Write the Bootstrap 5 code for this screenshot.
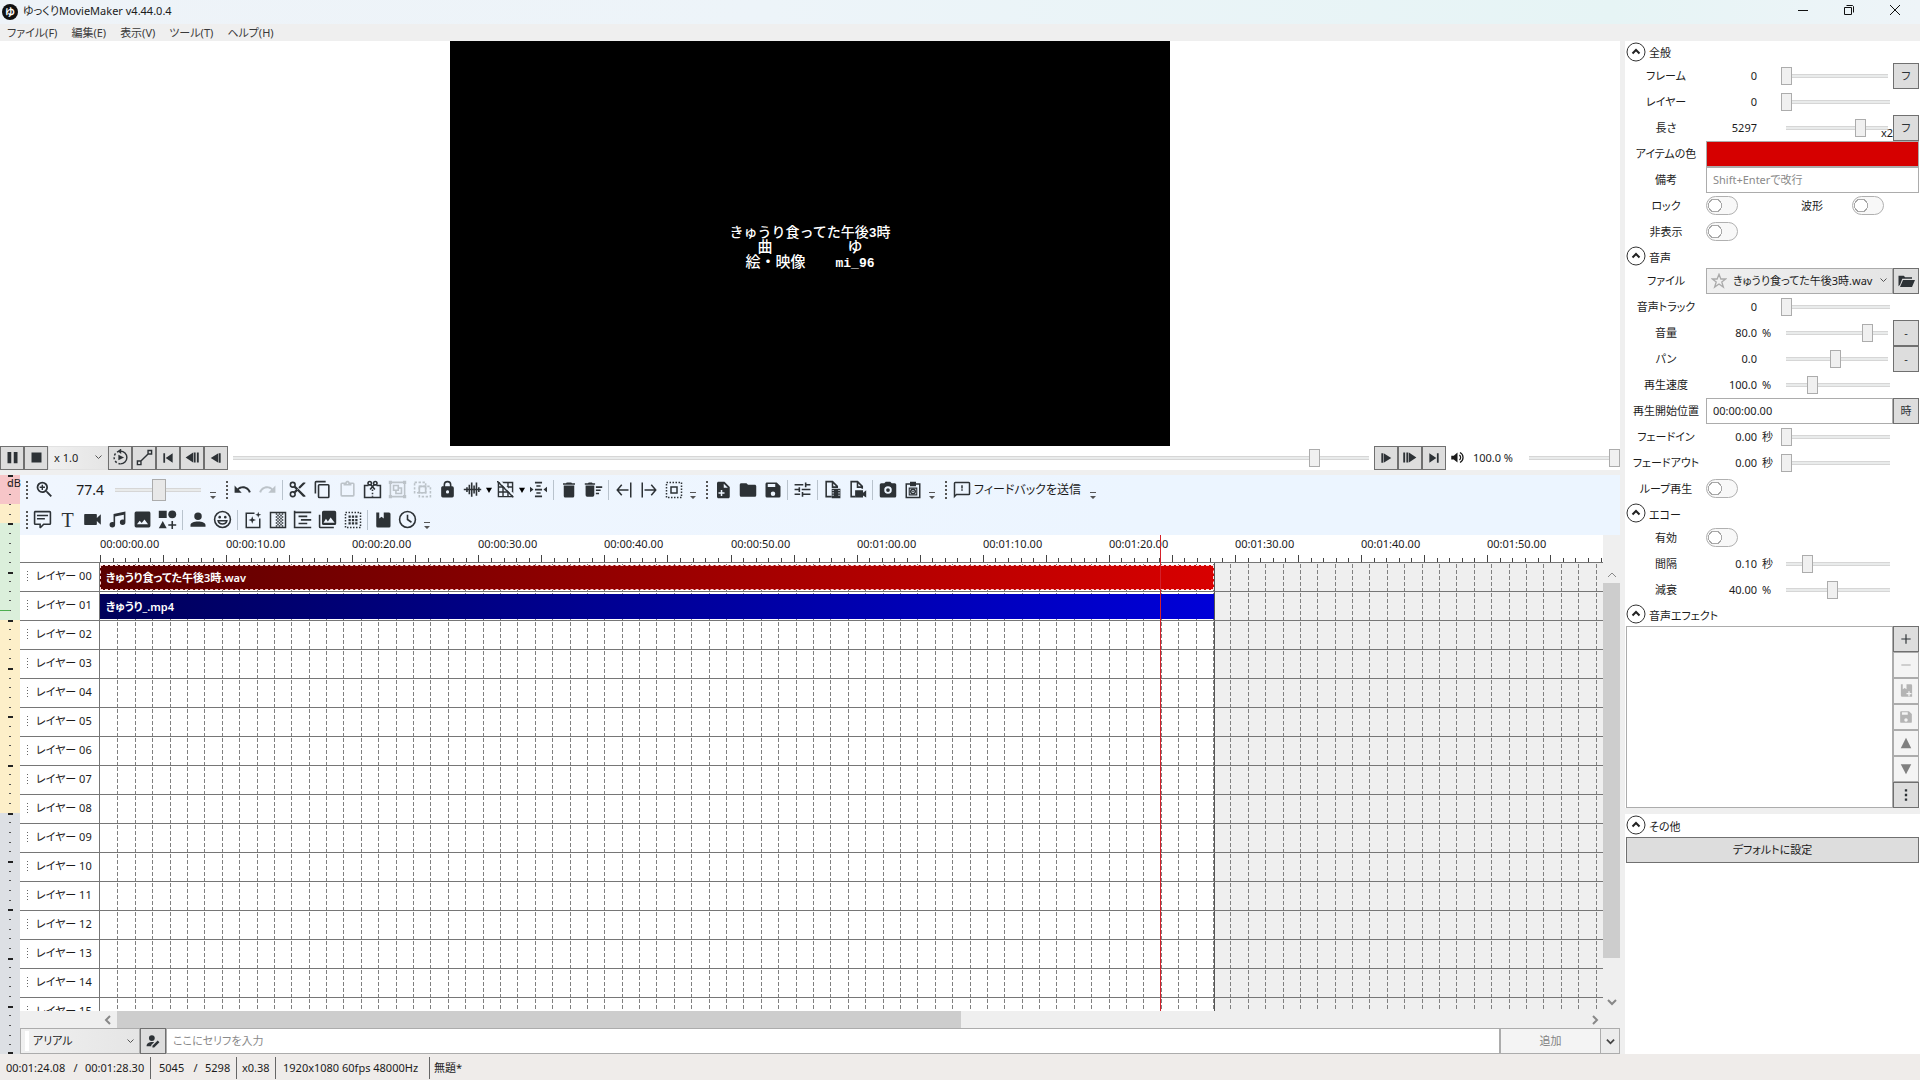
<!DOCTYPE html>
<html lang="ja">
<head>
<meta charset="utf-8">
<meta name="viewport" content="width=device-width, initial-scale=1">
<title>ゆっくりMovieMaker v4.44.0.4</title>
<link href="https://cdn.jsdelivr.net/npm/bootstrap@5.3.0/dist/css/bootstrap.min.css" rel="stylesheet">
<style>
:root{--ink:#2d3236;--line:#767676;--soft:#acacac;--chrome:#efefef;--face:#dddddd}
body{font:11px/16px "Noto Sans","Noto Sans CJK JP",sans-serif;font-feature-settings:"palt";color:#1b1b1b;background:var(--chrome);overflow:hidden}
button,input,select{font:inherit;font-feature-settings:inherit;color:inherit;border-radius:0;margin:0}
svg{display:block;flex:none}
.ico{width:19px;height:19px;fill:currentColor}
.ln{fill:none;stroke:currentColor;stroke-width:2}
main,.workrow,.timerow{min-height:0}
.shrinkable{min-width:0}
.titlebar{height:24px;padding-right:2px;background:linear-gradient(90deg,#eef3f8 0,#edf4f9 40%,#e6f4f5 84%,#eef4f8 100%)}
.titlebar .appname{padding:3px 0 0 3px}
.winbtn{width:46px;height:20px;border:0;background:none;display:flex;align-items:center;justify-content:center;padding:0}
.menubar{height:17px;padding:1px 0 0 7px;gap:14px}
.menubar a{color:#3a3a3a;text-decoration:none}
.stage{background:#fff}
.screen{width:720px;aspect-ratio:16/9;background:#000;color:#fff}
.caption-px{font:500 15px/15px "Liberation Mono","Noto Sans CJK JP",monospace;font-feature-settings:normal;padding-top:11px;white-space:pre}
.caption-px .song{font-size:14px}
.caption-px .half{font-size:13px;font-weight:700}
.playbar{height:24px;background:#fff}
.face{width:24px;height:24px;padding:0;border:1px solid #707070;background:var(--face);display:flex;align-items:center;justify-content:center;color:var(--ink);flex:none}
.face:disabled{border-color:var(--soft);background:#f4f4f4;color:#b4b4b4}
.combo{appearance:none;border:1px solid var(--soft);padding:0 16px 0 6px;background:url("data:image/svg+xml,%3Csvg xmlns='http://www.w3.org/2000/svg' width='7' height='5'%3E%3Cpath d='M.5.5l3 3 3-3' fill='none' stroke='%23555'/%3E%3C/svg%3E") right 5px center no-repeat,linear-gradient(90deg,#f0f0f0,#e5e5e5)}
.speed{width:60px;height:24px;border-color:#e2e2e2;padding-left:5px}
.volume{width:96px}
.volval{padding:0 11px 0 4px}
.track{appearance:none;background:none;height:18px;padding:0;min-width:0}
.track::-webkit-slider-runnable-track{height:18px;background:linear-gradient(#d6d6d6 0 1px,#e9ebeb 1px 3px,#d6d6d6 3px 4px) center/calc(100% - 10px) 4px no-repeat}
.track::-webkit-slider-thumb{appearance:none;width:11px;height:18px;border:1px solid var(--soft);border-radius:0;background:#f0f0f0}
.track.big,.track.big::-webkit-slider-runnable-track{height:22px}
.track.big::-webkit-slider-thumb{width:14px;height:22px;background:#e8e8e8}
.zoomer{width:96px;margin-left:6px}
.rail{height:5px;background:var(--chrome)}
.splitter{width:5px;background:var(--chrome)}
.meter{width:20px;position:relative}
.meter .dblabel{position:absolute;left:7px;top:0}
.tools{height:60px;background:linear-gradient(90deg,#f0f6fe,#ecf5ff 70%)}
.toolrow{height:30px}
.grip{width:10px;height:20px;background:radial-gradient(circle,#555 0 1px,transparent 1px) 5px 0/4px 4px repeat-y}
.tb{width:25px;height:24px;border:0;padding:0;background:none;display:flex;align-items:center;justify-content:center;color:var(--ink)}
.tb.wide{width:29px}
.tb:disabled{color:#bcc3c9}
.tb.serif{font:20px/22px "Liberation Serif",serif}
.dd{width:8px;height:24px;border:0;padding:0;background:none;display:flex;align-items:center;justify-content:center;color:#000}
.vsep{width:1px;height:20px;margin:0 2px;background:#b9c3cd}
.more{width:14px;height:24px;border:0;padding:12px 0 0 3px;background:none;color:#555}
.zoomval{width:45px;font-size:14px;text-align:right}
.feedback{width:112px;border:0;background:none;padding:0;text-align:left;font-size:12px}
.ruler{height:27px;background:#fff;position:relative;overflow:hidden}
.ruler .stamp{position:absolute;top:1px}
.tracks{overflow:hidden;position:relative;min-height:0;background:#fff}
.layer{height:29px;border-top:1px solid var(--line);flex:none;position:relative}
.layer::before{content:"";position:absolute;left:0;right:0;top:-1px;height:1px;background:var(--line);z-index:2}
.layerhead{width:80px;border-right:1px solid var(--line);background:#fff;padding:0 0 2px 5px;gap:6px}
.dots{width:5px;height:11px;background:radial-gradient(circle,#666 0 1px,transparent 1px) 0 0/5px 3px repeat-y}
.lane{padding-top:2px;min-width:0}
.clip{height:25px;position:relative;z-index:2;color:#fff;font-weight:600;padding:3px 5px;line-height:18px;border:1px solid transparent}
.clip.audio{background:linear-gradient(90deg,#5a0000,#d80000) border-box;border:1px dashed #ffd6d6}
.clip.movie{background:linear-gradient(90deg,#00005a,#0000d8) border-box}
.gridlay{position:absolute;left:80px;top:0;right:0;bottom:0;z-index:1;pointer-events:none}
.after{position:absolute;top:1px;right:0;bottom:0;background:#efefef;border-left:1px solid #555}
.playhead{position:absolute;top:0;bottom:0;width:1px;background:#d4202a;z-index:5}
.vscroll{width:17px;background:var(--chrome);color:#888}
.hscroll{height:17px;color:#888;padding:0 20px 0 83px}
.thumbbar{background:#cdcdcd}
.entry{height:26px}
.voice{width:120px;padding-left:12px;background-color:#e8e8e8;box-shadow:none}
.voicebox{position:relative}
.voicebox .chip{position:absolute;left:5px;top:3px;width:4px;height:20px;background:#fff}
.field{border:1px solid var(--soft);background:#fff;padding:0 6px;min-width:0;outline:0}
.field::placeholder{color:#8a8a8a;opacity:1}
.addbtn{width:101px;border:1px solid var(--soft);background:#f4f4f4;color:#838383}
.addmenu{width:19px;border:1px solid var(--soft);border-left:0;background:#ececec;color:#444;padding:0}
.status{height:26px;background:#efecea;padding:1px 0 0 6px}
.status .bar{width:1px;height:22px;background:#666}
.st1{width:60px}.st2{width:19px;text-align:center}.st3{width:65px}.st4{width:35px;padding-left:8px}.st5{width:31px}.st6{width:38px;padding-left:5px}.st7{width:153px;padding-left:7px}
.props{width:295px;background:#fff;padding:0 1px}
.exphead{height:23px;gap:3px;padding:0;border:0;background:none;width:100%;text-align:left}
.exphead:first-child{height:22px}
.exphead span{padding-top:3px}
.prop{height:26px}
.prop>label{width:80px;text-align:center;flex:none}
.prop>label.second{width:114px;padding-left:34px}
.num{width:51px;text-align:right;flex:none}
.unit{width:24px;padding-left:5px;flex:none}
.sq{width:26px;height:26px}
.noend{margin-right:24px}
.tog{appearance:none;width:32px;height:19px;border:1px solid #b0b0b0;border-radius:10px;background:radial-gradient(circle at 8px 50%,#fff 0 6px,#a8a8a8 6px 7px,transparent 7px) #f8f8f8;flex:none}
.swatch{appearance:none;border:1px solid var(--soft);padding:0;height:26px;background:none}
.swatch::-webkit-color-swatch-wrapper{padding:0}
.swatch::-webkit-color-swatch{border:0;border-radius:0}
.times{position:absolute;right:0;bottom:-2px;line-height:12px}
.starred{position:relative}
.starred svg{position:absolute;left:5px;top:5px;color:#aaa}
.starred select{padding-left:26px;height:26px}
.fxlist{border:1px solid var(--soft);background:#fff}
.gap6{height:6px;margin:0 -1px;background:var(--chrome)}
.defaults{height:26px;border:1px solid #707070;background:var(--face)}
</style>
<script src="https://cdn.jsdelivr.net/npm/bootstrap@5.3.0/dist/js/bootstrap.bundle.min.js"></script>
</head>
<body class="vh-100 d-flex flex-column">

<svg width="0" height="0" class="position-absolute" aria-hidden="true">
<symbol id="zoomin" viewBox="0 0 24 24"><path d="M15.5,14L20.5,19L19,20.5L14,15.5V14.71L13.73,14.43C12.59,15.41 11.11,16 9.5,16A6.5,6.5 0 0,1 3,9.5A6.5,6.5 0 0,1 9.5,3A6.5,6.5 0 0,1 16,9.5C16,11.11 15.41,12.59 14.43,13.73L14.71,14H15.5M9.5,14C12,14 14,12 14,9.5C14,7 12,5 9.5,5C7,5 5,7 5,9.5C5,12 7,14 9.5,14M12.5,10.3H10.3V12.5H8.7V10.3H6.5V8.7H8.7V6.5H10.3V8.7H12.5Z"/></symbol>
<symbol id="undo" viewBox="0 0 24 24"><path d="M12.5,8C9.85,8 7.45,9 5.6,10.6L2,7V16H11L7.38,12.38C8.77,11.22 10.54,10.5 12.5,10.5C16.04,10.5 19.05,12.81 20.1,16L22.47,15.22C21.08,11.03 17.15,8 12.5,8Z"/></symbol>
<symbol id="redo" viewBox="0 0 24 24"><path d="M18.4,10.6C16.55,9 14.15,8 11.5,8C6.85,8 2.92,11.03 1.54,15.22L3.9,16C4.95,12.81 7.95,10.5 11.5,10.5C13.45,10.5 15.23,11.22 16.62,12.38L13,16H22V7L18.4,10.6Z"/></symbol>
<symbol id="cut" viewBox="0 0 24 24"><path d="M19,3L13,9L15,11L22,4V3M12,12.5A0.5,0.5 0 0,1 11.5,12A0.5,0.5 0 0,1 12,11.5A0.5,0.5 0 0,1 12.5,12A0.5,0.5 0 0,1 12,12.5M6,20A2,2 0 0,1 4,18C4,16.89 4.9,16 6,16A2,2 0 0,1 8,18C8,19.11 7.1,20 6,20M6,8A2,2 0 0,1 4,6C4,4.89 4.9,4 6,4A2,2 0 0,1 8,6C8,7.11 7.1,8 6,8M9.64,7.64C9.87,7.14 10,6.59 10,6A4,4 0 0,0 6,2A4,4 0 0,0 2,6A4,4 0 0,0 6,10C6.59,10 7.14,9.87 7.64,9.64L10,12L7.64,14.36C7.14,14.13 6.59,14 6,14A4,4 0 0,0 2,18A4,4 0 0,0 6,22A4,4 0 0,0 10,18C10,17.41 9.87,16.86 9.64,16.36L12,14L19,21H22V20L9.64,7.64Z"/></symbol>
<symbol id="copy" viewBox="0 0 24 24"><path d="M19,21H8V7H19M19,5H8A2,2 0 0,0 6,7V21A2,2 0 0,0 8,23H19A2,2 0 0,0 21,21V7A2,2 0 0,0 19,5M16,1H4A2,2 0 0,0 2,3V17H4V3H16V1Z"/></symbol>
<symbol id="paste" viewBox="0 0 24 24"><path d="M19,3H14.82C14.4,1.84 13.3,1 12,1C10.7,1 9.6,1.84 9.18,3H5A2,2 0 0,0 3,5V19A2,2 0 0,0 5,21H19A2,2 0 0,0 21,19V5A2,2 0 0,0 19,3M12,3A1,1 0 0,1 13,4A1,1 0 0,1 12,5A1,1 0 0,1 11,4A1,1 0 0,1 12,3M7,7H17V5H19V19H5V5H7V7Z"/></symbol>
<symbol id="split" viewBox="0 0 24 24"><g class="ln"><path d="M7,7H2V22H22V7H17"/><circle cx="8.500" cy="4" r="2.200"/><circle cx="15.500" cy="4" r="2.200"/><path d="M10,6L15,12M14,6L9,12"/><path d="M12,12V21" stroke-dasharray="2 2"/></g></symbol>
<symbol id="group" viewBox="0 0 24 24"><path d="M1,1V5H2V19H1V23H5V22H19V23H23V19H22V5H23V1H19V2H5V1M5,4H19V5H20V19H19V20H5V19H4V5H5M6,6V14H9V18H18V9H14V6M8,8H12V12H8M14,11H16V16H11V14H14"/></symbol>
<symbol id="ungroup" viewBox="0 0 24 24"><g class="ln"><path d="M2,3H16V16H2Z" stroke-dasharray="3 2"/><path d="M8,8H22V21H8Z" stroke-dasharray="3 2"/><path d="M8,16V8H16V16Z"/></g></symbol>
<symbol id="lock" viewBox="0 0 24 24"><path d="M12,17A2,2 0 0,0 14,15C14,13.89 13.1,13 12,13A2,2 0 0,0 10,15A2,2 0 0,0 12,17M18,8A2,2 0 0,1 20,10V20A2,2 0 0,1 18,22H6A2,2 0 0,1 4,20V10C4,8.89 4.9,8 6,8H7V6A5,5 0 0,1 12,1A5,5 0 0,1 17,6V8H18M12,3A3,3 0 0,0 9,6V8H15V6A3,3 0 0,0 12,3Z"/></symbol>
<symbol id="wave" viewBox="0 0 24 24"><path class="ln" d="M1,12H23M5,9V15M8,6V18M11,3V21M14,7V17M17,3V20M20,9V15"/></symbol>
<symbol id="gridoff" viewBox="0 0 24 24"><g class="ln"><path d="M2,2H22V22H2ZM8.500,2V22M15.500,2V22M2,8.500H22M2,15.500H22"/><path d="M3,-1L25,21" stroke="#eff6fe" stroke-width="3"/><path d="M0,0L23,23"/></g></symbol>
<symbol id="between" viewBox="0 0 24 24"><path d="M7,1H17V3.500H7ZM9,6H15V8H9ZM7,11H17V13.500H7ZM9,16H15V18H9ZM7,20.500H17V23H7ZM0,8L5,12L0,16ZM24,8L19,12L24,16Z"/></symbol>
<symbol id="trash" viewBox="0 0 24 24"><path d="M20,3H16L15,2H9L8,3H4V5H20M5,20A2,2 0 0,0 7,22H17A2,2 0 0,0 19,20V6H5Z"/></symbol>
<symbol id="sweep" viewBox="0 0 24 24"><path d="M15,16H19V18H15V16M15,8H23V10H15V8M15,12H21V14H15V12M2,19A2,2 0 0,0 4,21H11A2,2 0 0,0 13,19V7H2V19M14,4H11L10,3H6L5,4H1V6H14V4Z"/></symbol>
<symbol id="toleft" viewBox="0 0 24 24"><path class="ln" d="M21,2V22M18,12H3M9,5L3,12L9,19"/></symbol>
<symbol id="toright" viewBox="0 0 24 24"><path class="ln" d="M3,2V22M6,12H21M15,5L21,12L15,19"/></symbol>
<symbol id="selall" viewBox="0 0 24 24"><g class="ln"><path d="M2,2H22V22H2Z" stroke-dasharray="2 2"/><path d="M8,8H16V16H8Z"/></g></symbol>
<symbol id="newfile" viewBox="0 0 24 24"><path fill-rule="evenodd" d="M14 1H6C4.890 1 4 1.890 4 3V21C4 22.110 4.890 23 6 23H19C20.110 23 21 22.110 21 21V8L14 1M13 9V3.500L18.500 9H13M11,12V15H14V17H11V20H9V17H6V15H9V12Z"/></symbol>
<symbol id="folder" viewBox="0 0 24 24"><path d="M10,3H3C1.890,3 1,3.890 1,5V19A2,2 0 0,0 3,21H21A2,2 0 0,0 23,19V7C23,5.890 22.100,5 21,5H12L10,3Z"/></symbol>
<symbol id="save" viewBox="0 0 24 24"><path d="M15,8H5V4H15M12,20A3,3 0 0,1 9,17A3,3 0 0,1 12,14A3,3 0 0,1 15,17A3,3 0 0,1 12,20M17,2H4C2.890,2 2,2.900 2,4V20A2,2 0 0,0 4,22H20A2,2 0 0,0 22,20V7L17,2Z"/></symbol>
<symbol id="tune" viewBox="0 0 24 24"><path d="M2,17V19H9V17H2M2,5V7H13V5H2M13,21V19H22V17H13V15H11V21H13M7,9V11H2V13H7V15H9V9H7M22,13V11H11V13H22M15,9H17V7H22V5H17V3H15V9Z"/></symbol>
<symbol id="filevid" viewBox="0 0 24 24"><path class="ln" d="M11,21H4V2H12L18,8V10M12,2V9H18"/><path fill-rule="evenodd" d="M11,11H22V23H11ZM12,12.500V14H13.500V12.500ZM12,15.500V17H13.500V15.500ZM12,18.500V20H13.500V18.500ZM19.500,12.500V14H21V12.500ZM19.500,15.500V17H21V15.500ZM19.500,18.500V20H21V18.500Z"/></symbol>
<symbol id="filecam" viewBox="0 0 24 24"><path class="ln" d="M9,21H4V2H12L18,8V11M12,2V9H18"/><path d="M9,13H19V16L23,13V22L19,19.500V22H9Z"/></symbol>
<symbol id="camera" viewBox="0 0 24 24"><path d="M3,3H7L9,1H15L17,3H21A2,2 0 0,1 23,5V20A2,2 0 0,1 21,22H3A2,2 0 0,1 1,20V5A2,2 0 0,1 3,3M12,7A5,5 0 0,0 7,12A5,5 0 0,0 12,17A5,5 0 0,0 17,12A5,5 0 0,0 12,7M12,9.500A2.500,2.500 0 0,1 14.500,12A2.500,2.500 0 0,1 12,14.500A2.500,2.500 0 0,1 9.500,12A2.500,2.500 0 0,1 12,9.500Z"/></symbol>
<symbol id="clipcam" viewBox="0 0 24 24"><g class="ln"><path d="M3,4H21V22H3Z"/><circle cx="12" cy="14" r="3"/><path d="M7,9.500H17V18.500H7Z" stroke-width="1.500"/></g><path d="M8,1H16V7H8Z"/><path d="M11,13H13V15H11Z"/></symbol>
<symbol id="feed" viewBox="0 0 24 24"><path d="M13,10H11V5.500H13V10M13,13H11V11H13V13M23,3V17A2,2 0 0,1 21,19H5L1,23V3A2,2 0 0,1 3,1H21A2,2 0 0,1 23,3M21,3H3V18.200L4.200,17H21V3Z"/></symbol>
<symbol id="speech" viewBox="0 0 24 24"><path d="M9,23A1,1 0 0,1 8,22V19H3A2,2 0 0,1 1,17V3C1,1.890 1.900,1 3,1H21A2,2 0 0,1 23,3V17A2,2 0 0,1 21,19H13.900L10.200,22.710C10,22.900 9.750,23 9.500,23H9M10,17V20.080L13.080,17H21V3H3V17H10M5,6H19V8H5V6M5,10H15V12H5V10Z"/></symbol>
<symbol id="video" viewBox="0 0 24 24"><path d="M17.500,10V6A1,1 0 0,0 16.500,5H2.500A1,1 0 0,0 1.500,6V18A1,1 0 0,0 2.500,19H16.500A1,1 0 0,0 17.500,18V14L22.500,18.500V5.500Z"/></symbol>
<symbol id="music" viewBox="0 0 24 24"><path d="M22,2V15.500A3.500,3.500 0 0,1 18.500,19A3.500,3.500 0 0,1 15,15.500A3.500,3.500 0 0,1 18.500,12C19.040,12 19.550,12.120 20,12.340V6L9,8.300V18.500A3.500,3.500 0 0,1 5.500,22A3.500,3.500 0 0,1 2,18.500A3.500,3.500 0 0,1 5.500,15C6.040,15 6.550,15.120 7,15.340V5L22,2Z"/></symbol>
<symbol id="image" viewBox="0 0 24 24"><path d="M8.500,13.500L11,16.500L14.500,12L19,18H5M22,20V4C22,2.890 21.100,2 20,2H4A2,2 0 0,0 2,4V20A2,2 0 0,0 4,22H20A2,2 0 0,0 22,20Z"/></symbol>
<symbol id="shapes" viewBox="0 0 24 24"><path d="M1,1H11V10H1ZM6,14L11,23H1ZM17,14H19V18H23V20H19V24H17V20H13V18H17Z"/><circle cx="18" cy="5.500" r="5"/></symbol>
<symbol id="person" viewBox="0 0 24 24"><path d="M12,2A5,5 0 0,1 17,7A5,5 0 0,1 12,12A5,5 0 0,1 7,7A5,5 0 0,1 12,2M12,14C17.500,14 22,16 22,18.500V21H2V18.500C2,16 6.500,14 12,14Z"/></symbol>
<symbol id="smile" viewBox="0 0 24 24"><circle class="ln" cx="12" cy="12" r="10"/><circle cx="8.500" cy="9" r="1.600"/><circle cx="15.500" cy="9" r="1.600"/><path class="ln" d="M6.500,13.500H17.500C16.500,19 7.500,19 6.500,13.500Z" stroke-width="1.600"/></symbol>
<symbol id="effect" viewBox="0 0 24 24"><path class="ln" d="M14,3H3V22H21V10"/><path d="M11,7L12.300,10.700L16,12L12.300,13.300L11,17L9.700,13.300L6,12L9.700,10.700ZM19,1L20,4L23,5L20,6L19,9L18,6L15,5L18,4Z"/></symbol>
<symbol id="trans" viewBox="0 0 24 24"><path class="ln" d="M2,2H22V22H2Z"/><path d="M9,3H11V5H9ZM9,7H11V9H9ZM9,11H11V13H9ZM9,15H11V17H9ZM9,19H11V21H9ZM11,5H13V7H11ZM11,9H13V11H11ZM11,13H13V15H11ZM11,17H13V19H11ZM13,3H15V5H13ZM13,7H15V9H13ZM13,11H15V13H13ZM13,15H15V17H13ZM13,19H15V21H13ZM15,5H17V7H15ZM15,9H17V11H15ZM15,13H17V15H15ZM15,17H17V19H15ZM17,3H19V5H17ZM17,7H19V9H17ZM17,11H19V13H17ZM17,15H19V17H17ZM17,19H19V21H17Z"/></symbol>
<symbol id="align" viewBox="0 0 24 24"><path class="ln" d="M2,1V23M2,3H23M7,8H18M10,12.500H23M7,17H18M2,22H23"/></symbol>
<symbol id="images" viewBox="0 0 24 24"><path d="M23,17V3A2,2 0 0,0 21,1H7A2,2 0 0,0 5,3V17A2,2 0 0,0 7,19H21A2,2 0 0,0 23,17M10,11L12.500,14.500L16,9.500L21,16H7M1,6V21A2,2 0 0,0 3,23H20V21H3V6Z"/></symbol>
<symbol id="scene" viewBox="0 0 24 24"><path class="ln" d="M2,2H22V22H2Z" stroke-dasharray="2 2"/><path d="M6,6H9V9H6ZM10.500,6H13.500V9H10.500ZM15,6H18V9H15ZM6,10.500H9V13.500H6ZM10.500,10.500H13.500V13.500H10.500ZM15,10.500H18V13.500H15ZM6,15H9V18H6ZM10.500,15H13.500V18H10.500ZM15,15H18V18H15Z"/></symbol>
<symbol id="book" viewBox="0 0 24 24"><path d="M3,2H7V10L10,7.500L13,10V2H20A2,2 0 0,1 22,4V20A2,2 0 0,1 20,22H5A2,2 0 0,1 3,20Z"/></symbol>
<symbol id="clock" viewBox="0 0 24 24"><g class="ln"><circle cx="12" cy="12" r="10"/><path d="M12,6V12L17,15.500"/></g></symbol>
<symbol id="pause" viewBox="0 0 24 24"><path d="M4,3H10V21H4ZM14,3H20V21H14Z"/></symbol>
<symbol id="stop" viewBox="0 0 24 24"><path d="M4,4H20V20H4Z"/></symbol>
<symbol id="loop" viewBox="0 0 24 24"><path class="ln" d="M12,3A9,9 0 0,1 12,21"/><path class="ln" d="M12,21A9,9 0 0,1 12,3" stroke-dasharray="3 2.600"/><path d="M13,-1V7L8,3ZM9,8L17,12L9,16Z"/></symbol>
<symbol id="range" viewBox="0 0 24 24"><path class="ln" d="M2,17H7V22H2ZM17,2H22V7H17ZM7,17L17,7"/></symbol>
<symbol id="first" viewBox="0 0 24 24"><path d="M4,4H7V20H4ZM20,4V20L8,12Z"/></symbol>
<symbol id="back2" viewBox="0 0 24 24"><path d="M13,4V20L1,12ZM14,4H17V20H14ZM19,4H22V20H19Z"/></symbol>
<symbol id="back1" viewBox="0 0 24 24"><path d="M16,4V20L3,12ZM17,4H20V20H17Z"/></symbol>
<symbol id="fwd1" viewBox="0 0 24 24"><path d="M4,4H7V20H4ZM8,4L21,12L8,20Z"/></symbol>
<symbol id="fwd2" viewBox="0 0 24 24"><path d="M2,4H5V20H2ZM7,4H10V20H7ZM11,4L23,12L11,20Z"/></symbol>
<symbol id="last" viewBox="0 0 24 24"><path d="M4,4L16,12L4,20ZM17,4H20V20H17Z"/></symbol>
<symbol id="speaker" viewBox="0 0 24 24"><path d="M2,9V15H6L12,20V4L6,9Z"/><path class="ln" d="M15,8A5,5 0 0,1 15,16M16,4A9,9 0 0,1 16,20"/></symbol>
<symbol id="openfolder" viewBox="0 0 24 24"><path d="M2,19V5H9L11,7H20V9H7L4,17ZM8,10.500H24L20,20H4Z"/></symbol>
<symbol id="star" viewBox="0 0 24 24"><path class="ln" stroke-width="1.500" d="M12,2L14.800,9H22L16.200,13.500L18.500,21L12,16.500L5.500,21L7.800,13.500L2,9H9.200Z"/></symbol>
<symbol id="plus" viewBox="0 0 24 24"><path class="ln" stroke-width="2.500" d="M12,4V20M4,12H20"/></symbol>
<symbol id="minus" viewBox="0 0 24 24"><path class="ln" d="M4,12H20"/></symbol>
<symbol id="booksave" viewBox="0 0 24 24"><path fill-rule="evenodd" d="M3,2H6V10L9,8L12,10V2H19A2,2 0 0,1 21,4V22H5A2,2 0 0,1 3,20ZM15,13V16H12V18H15V21H17V18H20V16H17V13Z"/></symbol>
<symbol id="up" viewBox="0 0 24 24"><path fill="#808080" d="M12,3L21,21H3Z"/></symbol>
<symbol id="down" viewBox="0 0 24 24"><path fill="#808080" d="M12,21L21,4H3Z"/></symbol>
<symbol id="kebab" viewBox="0 0 24 24"><path d="M10,2H14V6H10ZM10,10H14V14H10ZM10,18H14V22H10Z"/></symbol>
<symbol id="voice" viewBox="0 0 24 24"><circle cx="10" cy="7" r="5"/><path d="M1,20C1,15 8,12.500 14,14L9,19V21H1ZM11,20L20,11L23,14L14,23H11Z"/></symbol>
<symbol id="exp" viewBox="0 0 20 20"><circle cx="10" cy="10" r="9" fill="none" stroke="#333"/><path d="M6.500,11.500L10,8L13.500,11.500" fill="none" stroke="#222" stroke-width="2"/></symbol>
<symbol id="ddt" viewBox="0 0 8 8"><path d="M0,1H8L4,8Z"/></symbol>
<symbol id="ovf" viewBox="0 0 8 8"><path d="M1,0H7V1H1ZM1,4H7L4,7Z"/></symbol>
<symbol id="cl" viewBox="0 0 10 10"><path class="ln" stroke-width="1" d="M7,1L3,5L7,9"/></symbol>
<symbol id="cr" viewBox="0 0 10 10"><path class="ln" stroke-width="1" d="M3,1L7,5L3,9"/></symbol>
<symbol id="cu" viewBox="0 0 10 10"><path class="ln" stroke-width="1" d="M1,7L5,3L9,7"/></symbol>
<symbol id="cd" viewBox="0 0 10 10"><path class="ln" stroke-width="1" d="M1,3L5,7L9,3"/></symbol>
</svg>

<header class="titlebar d-flex align-items-start">
  <svg class="mt-1" width="20" height="16" viewBox="0 0 20 16"><circle cx="10" cy="8" r="8" fill="#111"/><text x="10" y="12" font-size="10" font-weight="700" text-anchor="middle" fill="#fff">ゆ</text></svg>
  <span class="appname">ゆっくりMovieMaker v4.44.0.4</span>
  <div class="ms-auto d-flex">
    <button class="winbtn" aria-label="最小化"><svg width="10" height="10"><path d="M0,5.500H10" stroke="#111"/></svg></button>
    <button class="winbtn" aria-label="元に戻す"><svg width="10" height="10"><path d="M.5,2.500H7.500V9.500H.5ZM2.500,.5H8.500L9.500,1.500V7.500" fill="none" stroke="#111"/></svg></button>
    <button class="winbtn" aria-label="閉じる"><svg width="10" height="10"><path d="M0,0L10,10M10,0L0,10" stroke="#111"/></svg></button>
  </div>
</header>
<nav class="menubar d-flex align-items-center">
  <a href="#">ファイル(F)</a><a href="#">編集(E)</a><a href="#">表示(V)</a><a href="#">ツール(T)</a><a href="#">ヘルプ(H)</a>
</nav>

<main class="d-flex flex-grow-1">
  <div class="d-flex flex-column flex-grow-1 shrinkable">
    <section class="stage d-flex justify-content-center">
      <div class="screen d-flex flex-column align-items-center justify-content-center caption-px"><span class="song">きゅうり食ってた午後<span class="half">3</span>時</span><span>曲　　　　　ゆ</span><span>絵・映像　　<span class="half">mi_96</span></span></div>
    </section>
    <section class="playbar d-flex align-items-center">
      <button class="face" aria-label="一時停止" data-i="pause" data-s="15"></button>
      <button class="face" aria-label="停止" data-i="stop" data-s="15"></button>
      <select class="combo speed" aria-label="再生速度"><option>x 1.0</option></select>
      <button class="face" aria-label="ループ" data-i="loop" data-s="17"></button>
      <button class="face" aria-label="範囲" data-i="range" data-s="17"></button>
      <button class="face" aria-label="先頭へ" data-i="first" data-s="14"></button>
      <button class="face" aria-label="戻る" data-i="back2" data-s="15"></button>
      <button class="face" aria-label="1フレーム戻る" data-i="back1" data-s="14"></button>
      <input type="range" class="track flex-grow-1" aria-label="再生位置" min="0" max="5298" value="5045">
      <button class="face" aria-label="1フレーム進む" data-i="fwd1" data-s="14"></button>
      <button class="face" aria-label="進む" data-i="fwd2" data-s="15"></button>
      <button class="face" aria-label="末尾へ" data-i="last" data-s="14"></button>
      <span class="px-1" data-i="speaker" data-s="15"></span>
      <span class="volval">100.0 %</span>
      <input type="range" class="track volume" aria-label="音量" value="100">
    </section>
    <div class="rail"></div>
    <div class="workrow d-flex flex-grow-1">
      <div class="meter"><svg id="meter" width="20" height="100%"></svg><span class="dblabel">dB</span></div>
      <div class="d-flex flex-column flex-grow-1 shrinkable">
        <div class="tools">
          <div class="toolrow d-flex align-items-center">
            <span class="grip"></span>
            <button class="tb wide" aria-label="拡大" data-i="zoomin" data-s="21"></button>
            <span class="zoomval">77.4</span>
            <input type="range" class="track big zoomer" aria-label="ズーム" value="51">
            <button class="more" aria-label="その他"></button>
            <span class="grip"></span>
            <button class="tb" aria-label="元に戻す" data-i="undo"></button><button class="tb" aria-label="やり直す" data-i="redo" disabled></button><span class="vsep"></span>
            <button class="tb" aria-label="切り取り" data-i="cut"></button><button class="tb" aria-label="コピー" data-i="copy"></button><button class="tb" aria-label="貼り付け" data-i="paste" disabled></button><button class="tb" aria-label="分割" data-i="split"></button><button class="tb" aria-label="グループ化" data-i="group" disabled></button><button class="tb" aria-label="グループ解除" data-i="ungroup" disabled></button><button class="tb" aria-label="ロック" data-i="lock"></button><button class="tb" aria-label="波形" data-i="wave"></button><button class="dd" aria-label="波形の種類" data-i="ddt" data-s="6"></button><button class="tb" aria-label="グリッド" data-i="gridoff" data-s="17"></button><button class="dd" aria-label="グリッドの種類" data-i="ddt" data-s="6"></button><button class="tb" aria-label="間隔" data-i="between" data-s="17"></button><span class="vsep"></span>
            <button class="tb" aria-label="削除" data-i="trash" data-s="18"></button><button class="tb" aria-label="詰めて削除" data-i="sweep"></button><span class="vsep"></span>
            <button class="tb" aria-label="左へ" data-i="toleft" data-s="18"></button><button class="tb" aria-label="右へ" data-i="toright" data-s="18"></button><button class="tb" aria-label="全選択" data-i="selall" data-s="18"></button><button class="more" aria-label="その他"></button>
            <span class="grip"></span>
            <button class="tb" aria-label="新規" data-i="newfile" data-s="18"></button><button class="tb" aria-label="開く" data-i="folder" data-s="18"></button><button class="tb" aria-label="保存" data-i="save" data-s="18"></button><span class="vsep"></span>
            <button class="tb" aria-label="設定" data-i="tune"></button><span class="vsep"></span>
            <button class="tb" aria-label="動画出力" data-i="filevid"></button><button class="tb" aria-label="出力" data-i="filecam"></button><span class="vsep"></span>
            <button class="tb" aria-label="画像保存" data-i="camera" data-s="18"></button><button class="tb" aria-label="画像コピー" data-i="clipcam" data-s="18"></button><button class="more" aria-label="その他"></button>
            <span class="grip"></span>
            <button class="tb" aria-label="フィードバック" data-i="feed" data-s="18"></button><button class="feedback">フィードバックを送信</button><button class="more" aria-label="その他"></button>
          </div>
          <div class="toolrow d-flex align-items-center">
            <span class="grip"></span>
            <button class="tb" aria-label="ボイス" data-i="speech"></button><button class="tb serif" aria-label="テキスト">T</button><button class="tb" aria-label="動画" data-i="video"></button><button class="tb" aria-label="音声" data-i="music"></button><button class="tb" aria-label="画像" data-i="image"></button><button class="tb" aria-label="図形" data-i="shapes"></button><span class="vsep"></span>
            <button class="tb" aria-label="立ち絵" data-i="person" data-s="18"></button><button class="tb" aria-label="表情" data-i="smile"></button><span class="vsep"></span>
            <button class="tb" aria-label="エフェクト" data-i="effect" data-s="18"></button><button class="tb" aria-label="場面切り替え" data-i="trans" data-s="18"></button><button class="tb" aria-label="整列" data-i="align"></button><button class="tb" aria-label="画面の複製" data-i="images"></button><button class="tb" aria-label="グループ制御" data-i="scene" data-s="18"></button><span class="vsep"></span>
            <button class="tb" aria-label="テンプレート" data-i="book" data-s="18"></button><button class="tb" aria-label="履歴" data-i="clock"></button><button class="more" aria-label="その他"></button>
          </div>
        </div>
        <div class="timerow d-flex flex-grow-1">
          <div class="d-flex flex-column flex-grow-1 position-relative shrinkable">
            <div class="ruler flex-shrink-0" id="ruler"><svg id="ticks" width="100%" height="27" shape-rendering="crispEdges"></svg></div>
            <div class="tracks flex-grow-1" id="tracks">
              <div class="gridlay"><div class="after" id="after"></div><svg id="dashes" class="position-absolute" width="100%" height="100%" shape-rendering="crispEdges"></svg></div>
            </div>
            <div class="playhead" id="playhead"></div>
          </div>
          <div class="vscroll d-flex flex-column align-items-center">
            <svg class="mt-4" width="10" height="24" viewBox="0 -14 10 24"><path d="M1,4L5,0L9,4" fill="none" stroke="#888"/></svg>
            <div class="thumbbar w-100" style="flex:375"></div>
            <div style="flex:39"></div>
            <svg class="mb-1" width="10" height="10"><use href="#cd"/></svg>
          </div>
        </div>
        <div class="hscroll d-flex align-items-center">
          <svg class="me-1" width="10" height="10"><use href="#cl"/></svg>
          <div class="thumbbar h-100" style="flex:845"></div>
          <div style="flex:630"></div>
          <svg width="10" height="10"><use href="#cr"/></svg>
        </div>
        <div class="entry d-flex">
          <div class="voicebox d-flex"><select class="combo voice" aria-label="キャラクター"><option>アリアル</option></select><span class="chip"></span></div>
          <button class="face sq" aria-label="ボイス編集" data-i="voice" data-s="14"></button>
          <input class="field flex-grow-1" type="text" aria-label="セリフ" placeholder="ここにセリフを入力">
          <button class="addbtn" disabled>追加</button>
          <button class="addmenu d-flex align-items-center justify-content-center" aria-label="追加メニュー" data-i="cd" data-s="9"></button>
        </div>
      </div>
    </div>
  </div>
  <div class="splitter flex-shrink-0"></div>
  <aside class="props flex-shrink-0" id="props"></aside>
</main>
<footer class="status d-flex align-items-center flex-shrink-0">
  <span class="st1">00:01:24.08</span><span class="st2">/</span><span class="st3">00:01:28.30</span><span class="bar"></span>
  <span class="st4">5045</span><span class="st2">/</span><span class="st5">5298</span><span class="bar"></span>
  <span class="st6">x0.38</span><span class="bar"></span><span class="st7">1920x1080 60fps 48000Hz</span><span class="bar"></span><span class="ps-1">無題*</span>
</footer>

<script>
const icon = (id, s = 19) => `<svg class="ico" style="width:${s}px;height:${s}px"><use href="#${id}"/></svg>`;
const props = document.getElementById('props');
let n = 0;

// Property panel rows
const head = t => `<button class="exphead d-flex align-items-center">${icon('exp', 20)}<span>${t}</span></button>`;
const slider = (label, num, unit, val, btn, extra = '') => {
  const id = 'p' + (++n);
  return `<div class="prop d-flex align-items-center"><label for="${id}">${label}</label><span class="num">${num}</span><span class="unit">${unit}</span>
  <div class="flex-grow-1 d-flex position-relative ${btn ? '' : 'noend'}"><input type="range" class="track w-100" id="${id}" value="${val}">${extra}</div>${btn ? `<button class="face sq">${btn}</button>` : ''}</div>`;
};
const toggle = (label, more = '') => {
  const id = 'p' + (++n);
  return `<div class="prop d-flex align-items-center"><label for="${id}">${label}</label><input type="checkbox" class="tog" id="${id}">${more}</div>`;
};
props.innerHTML =
  head('全般') + slider('フレーム', '0', '', 0, 'フ') + slider('レイヤー', '0', '', 0) +
  slider('長さ', '5297', '', 73, 'フ', '<span class="times">x2</span>') +
  `<div class="prop d-flex align-items-center"><label for="col">アイテムの色</label><input type="color" class="swatch flex-grow-1" id="col" value="#d60000"></div>
   <div class="prop d-flex align-items-center"><label for="memo">備考</label><input type="text" class="field flex-grow-1 h-100" id="memo" placeholder="Shift+Enterで改行"></div>` +
  toggle('ロック', '<label class="second" for="wv">波形</label><input type="checkbox" class="tog" id="wv">') + toggle('非表示') +
  head('音声') +
  `<div class="prop d-flex align-items-center"><label for="file">ファイル</label><div class="starred flex-grow-1">${icon('star', 16)}<select class="combo w-100" id="file"><option>きゅうり食ってた午後3時.wav</option></select></div><button class="face sq" aria-label="開く">${icon('openfolder', 18)}</button></div>` +
  slider('音声トラック', '0', '', 0) + slider('音量', '80.0', '%', 80, '-') + slider('パン', '0.0', '', 49, '-') + slider('再生速度', '100.0', '%', 25) +
  `<div class="prop d-flex align-items-center"><label for="st">再生開始位置</label><input type="text" class="field flex-grow-1 h-100" id="st" value="00:00:00.00"><button class="face sq">時</button></div>` +
  slider('フェードイン', '0.00', '秒', 0) + slider('フェードアウト', '0.00', '秒', 0) + toggle('ループ再生') +
  head('エコー') + toggle('有効') + slider('間隔', '0.10', '秒', 20) + slider('減衰', '40.00', '%', 45) +
  head('音声エフェクト') +
  `<div class="d-flex"><div class="fxlist flex-grow-1" role="listbox" aria-label="音声エフェクト"></div><div>` +
  [['plus', 0, '追加', 14], ['minus', 1, '削除', 14], ['booksave', 1, 'テンプレート', 15], ['save', 1, '保存', 14], ['up', 1, '上へ', 14], ['down', 1, '下へ', 14], ['kebab', 0, 'メニュー', 14]]
    .map(b => `<button class="face sq" aria-label="${b[2]}" ${b[1] ? 'disabled' : ''}>${icon(b[0], b[3])}</button>`).join('') +
  `</div></div><div class="gap6"></div>` + head('その他') + `<button class="defaults w-100 p-0">デフォルトに設定</button>`;

document.querySelectorAll('[data-i]').forEach(e => e.innerHTML = icon(e.dataset.i, e.dataset.s || 19));
document.querySelectorAll('.more').forEach(e => e.innerHTML = icon('ovf', 8));

// Timeline: 126 px for ten seconds, lanes start after the 80 px layer column
const LANE = 80, SEC = 12.61, STEP = 17.39, LENGTH = 1114, HEAD = 1060;
const clips = [{ c: 'audio', t: 'きゅうり食ってた午後3時.wav' }, { c: 'movie', t: 'きゅうり_.mp4' }];
const tracks = document.getElementById('tracks');
for (let i = 0; i < 16; i++) {
  const k = clips[i];
  tracks.insertAdjacentHTML('beforeend', `<div class="layer d-flex"><div class="layerhead d-flex align-items-center flex-shrink-0"><span class="dots"></span>レイヤー ${String(i).padStart(2, '0')}</div><div class="lane flex-grow-1">${k ? `<div class="clip ${k.c}" style="width:${LENGTH}px">${k.t}</div>` : ''}</div></div>`);
}
document.getElementById('after').style.left = LENGTH + 'px';
document.getElementById('playhead').style.left = LANE + HEAD + 'px';

function draw() {
  const w = tracks.clientWidth;
  let t = '', d = '';
  document.querySelectorAll('.stamp').forEach(e => e.remove());
  for (let s = 0; LANE + s * SEC < w; s++) {
    const x = Math.round(LANE + s * SEC), h = s % 5 ? 4 : 7;
    t += `<rect x="${x}" y="${27 - h}" width="1" height="${h}" fill="#444"/>`;
    if (s % 10 === 0 && x + 60 < w) {
      const m = String(Math.floor(s / 60)).padStart(2, '0'), q = String(s % 60).padStart(2, '0');
      document.getElementById('ruler').insertAdjacentHTML('beforeend', `<span class="stamp" style="left:${x}px">00:${m}:${q}.00</span>`);
    }
  }
  for (let i = 1; i * STEP < w - LANE; i++) {
    const x = Math.round(i * STEP);
    d += `<path d="M${x + .5},2V460" stroke="#808080" stroke-dasharray="4 2 4 2 4 2 4 2 4 1"/>`;
  }
  document.getElementById('ticks').innerHTML = t;
  document.getElementById('dashes').innerHTML = d;
  const H = document.querySelector('.meter').clientHeight, u = H / 60;
  let m = [[0, 3, '#f7c6c8'], [3, 5, '#fdeec8'], [5, 15, '#dbefdb'], [15, 35, '#fdefc9'], [35, 60, '#dde0e4']]
    .map(a => `<rect x="0" y="${Math.round(a[0] * u)}" width="20" height="${Math.ceil((a[1] - a[0]) * u)}" fill="${a[2]}"/>`).join('');
  for (let i = 0; i <= 60; i++) {
    const y = Math.round(i * u);
    m += i % 5 ? `<rect x="9" y="${y}" width="2" height="1" fill="#555"/>` : `<rect x="8" y="${Math.min(y, H - 2)}" width="5" height="2" fill="#222"/>`;
  }
  document.getElementById('meter').innerHTML = m + `<rect x="0" y="${Math.round(14 * u)}" width="10" height="1" fill="#4caf50"/>`;
}
draw();
addEventListener('resize', draw);
</script>
</body>
</html>
